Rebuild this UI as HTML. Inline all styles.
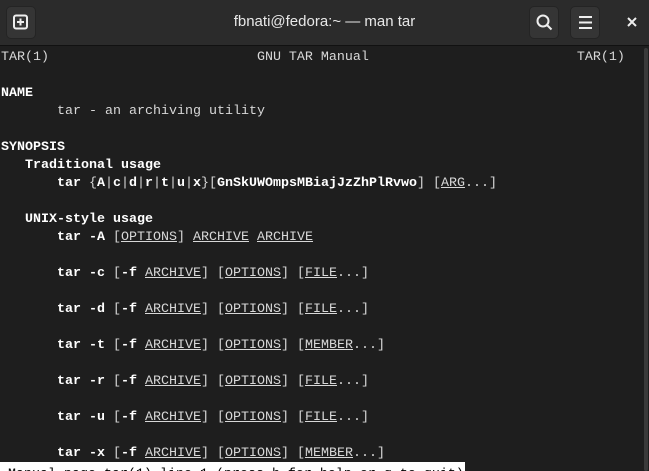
<!DOCTYPE html><html><head><style>
html,body{margin:0;width:649px;height:471px;overflow:hidden;background:#1e1e1e;font-family:"Liberation Sans",sans-serif}
.tb{position:absolute;left:0;top:0;width:649px;height:45px;background:#2b2b2b;border-bottom:1px solid #111}
.btn{position:absolute;top:6px;width:28px;height:31px;background:#353535;border-radius:5px;border:1px solid #242424}
.title{position:absolute;left:0;width:649px;top:13px;text-align:center;color:#e8e8e8;font-size:15px}
pre{position:absolute;left:1px;top:49px;margin:0;font-family:"Liberation Mono",monospace;font-size:13.33px;line-height:18px;color:#d8d8d8}
b{color:#fff}
u{text-decoration:underline}
.bar{position:absolute;left:0;top:462px;width:465px;height:9px;background:#fff;color:#000;font-family:"Liberation Mono",monospace;font-size:13.33px;line-height:18px;padding:4px 0 0 8px;box-sizing:border-box;white-space:pre;overflow:hidden}
.sb{position:absolute;left:644px;top:48px;width:4px;height:423px;background:#3a3a3a;border-radius:2px}
</style></head><body>
<div class="tb">
<div class="btn" style="left:6px"><svg width="28" height="31"><rect x="7" y="8.5" width="13" height="13" rx="2" fill="none" stroke="#eee" stroke-width="2"/><path d="M13.5 11.5v7M10 15h7" stroke="#eee" stroke-width="2"/></svg></div>
<div class="title">fbnati@fedora:~ — man tar</div>
<div class="btn" style="left:529px"><svg width="28" height="31"><circle cx="13" cy="14" r="5.5" fill="none" stroke="#eee" stroke-width="2"/><path d="M17 18l4.5 4.5" stroke="#eee" stroke-width="2"/></svg></div>
<div class="btn" style="left:570px"><svg width="28" height="31"><path d="M8 10h13M8 15.5h13M8 21h13" stroke="#eee" stroke-width="2"/></svg></div>
<svg style="position:absolute;left:625px;top:15px" width="14" height="14"><path d="M3 3l8 8M11 3l-8 8" stroke="#eee" stroke-width="2"/></svg>
</div>
<div class="sb"></div>
<pre>TAR(1)                          GNU TAR Manual                          TAR(1)

<b>NAME</b>
       tar - an archiving utility

<b>SYNOPSIS</b>
   <b>Traditional usage</b>
       <b>tar</b> {<b>A</b>|<b>c</b>|<b>d</b>|<b>r</b>|<b>t</b>|<b>u</b>|<b>x</b>}[<b>GnSkUWOmpsMBiajJzZhPlRvwo</b>] [<u>ARG</u>...]

   <b>UNIX-style usage</b>
       <b>tar -A</b> [<u>OPTIONS</u>] <u>ARCHIVE</u> <u>ARCHIVE</u>

       <b>tar -c</b> [<b>-f</b> <u>ARCHIVE</u>] [<u>OPTIONS</u>] [<u>FILE</u>...]

       <b>tar -d</b> [<b>-f</b> <u>ARCHIVE</u>] [<u>OPTIONS</u>] [<u>FILE</u>...]

       <b>tar -t</b> [<b>-f</b> <u>ARCHIVE</u>] [<u>OPTIONS</u>] [<u>MEMBER</u>...]

       <b>tar -r</b> [<b>-f</b> <u>ARCHIVE</u>] [<u>OPTIONS</u>] [<u>FILE</u>...]

       <b>tar -u</b> [<b>-f</b> <u>ARCHIVE</u>] [<u>OPTIONS</u>] [<u>FILE</u>...]

       <b>tar -x</b> [<b>-f</b> <u>ARCHIVE</u>] [<u>OPTIONS</u>] [<u>MEMBER</u>...]</pre>
<div class="bar">Manual page tar(1) line 1 (press h for help or q to quit)</div>
</body></html>
